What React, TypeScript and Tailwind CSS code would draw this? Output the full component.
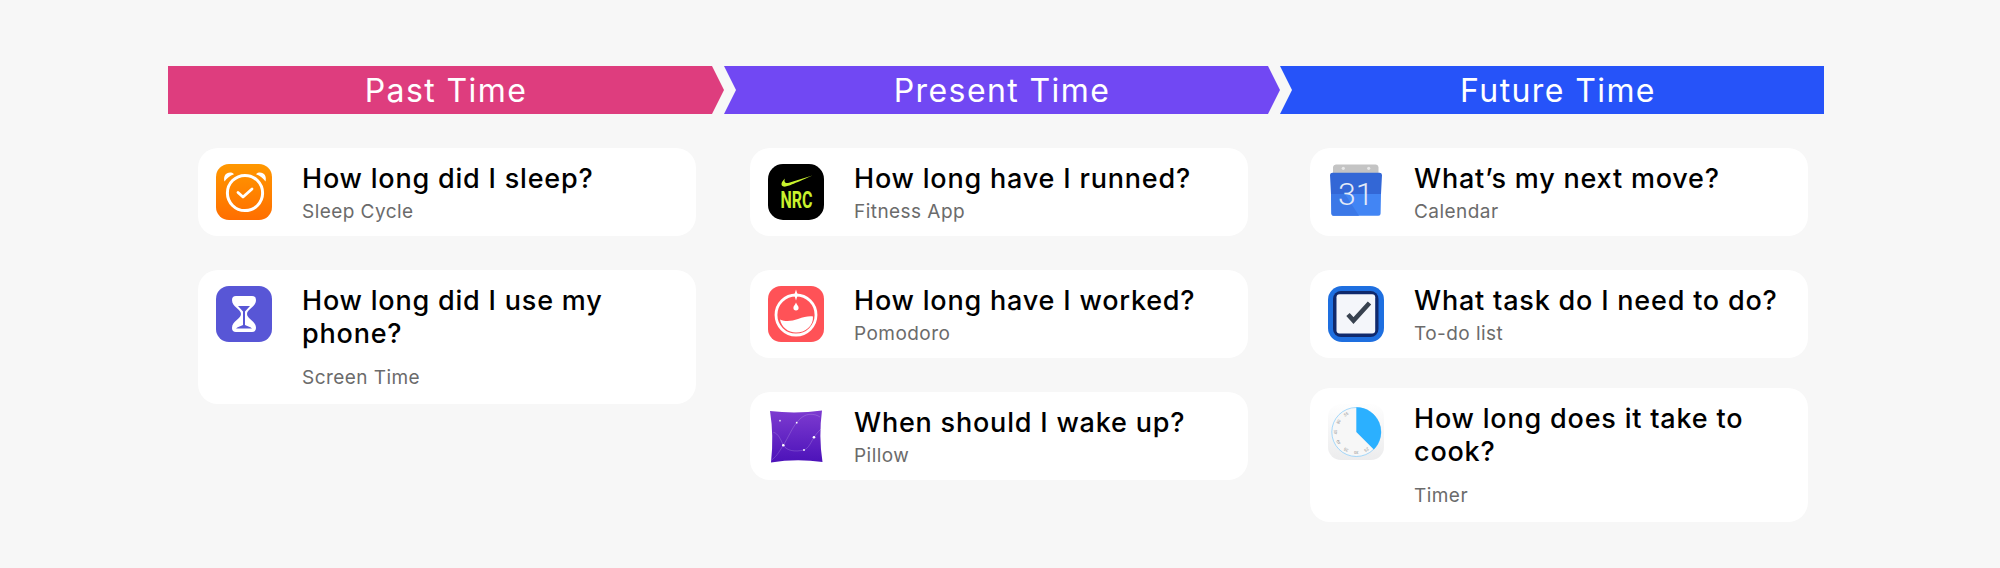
import type { ReactNode } from "react";

function IconFrame({ children }: { children: ReactNode }) {
  return (
    <svg viewBox="0 0 56 56" className="w-14 h-14 shrink-0 mt-4 ml-[18px]">
      {children}
    </svg>
  );
}

function SleepCycleIcon() {
  return (
    <IconFrame>
      <defs>
        <linearGradient id="sleep" x1="0" y1="0" x2="0" y2="1">
          <stop offset="0" stopColor="#ff9800" />
          <stop offset="1" stopColor="#ff6e00" />
        </linearGradient>
      </defs>
      <rect width="56" height="56" rx="13" fill="url(#sleep)" />
      <path d="M8.500 17.500C7 12 10 8 15 8.500 16.500 8.700 17.500 9.500 18 10.200 13.800 11.800 10.800 14.200 8.500 17.500Z" fill="#fff" />
      <path d="M49.500 17.500C51 12 48 8 43 8.500 41.500 8.700 40.500 9.500 40 10.200 44.200 11.800 47.200 14.200 49.500 17.500Z" fill="#fff" />
      <circle cx="29" cy="29" r="17.600" fill="none" stroke="#fff" strokeWidth="3" />
      <path d="M22 28.500 27 33 36 25" fill="none" stroke="#fff" strokeWidth="2.800" strokeLinecap="round" strokeLinejoin="round" />
    </IconFrame>
  );
}

function ScreenTimeIcon() {
  return (
    <IconFrame>
      <rect width="56" height="56" rx="13" fill="#5856d6" />
      <path
        d="M20 10H36A4 4 0 0 1 40 14C40 21 31 23 31 28 31 33 40 35 40 42A4 4 0 0 1 36 46H20A4 4 0 0 1 16 42C16 35 25 33 25 28 25 23 16 21 16 14A4 4 0 0 1 20 10Z"
        fill="#fff"
      />
      <path d="M22 20H34L29 25.500V39C31 40 34 40.500 36 42.500H20C22 40.500 25 40 27 39V25.500Z" fill="#5856d6" />
    </IconFrame>
  );
}

function NrcIcon() {
  return (
    <IconFrame>
      <rect width="56" height="56" rx="15" fill="#000" />
      <path d="M17 14.500C13.500 17.500 12 21.500 15.500 22.500 18 23.200 22 21.500 44.500 11.500L21 18.800C17.500 19.800 15.500 18 17 14.500Z" fill="#c9f22d" />
      <text x="28.500" y="44" textAnchor="middle" fontFamily="Roboto, sans-serif" fontWeight="700" fontSize="24" fill="#c9f22d" textLength="32" lengthAdjust="spacingAndGlyphs">
        NRC
      </text>
    </IconFrame>
  );
}

function PomodoroIcon() {
  return (
    <IconFrame>
      <rect width="56" height="56" rx="13" fill="#ff5257" />
      <circle cx="28" cy="29" r="20" fill="none" stroke="#fff" strokeWidth="2.800" />
      <path d="M28 3.500 29.300 7.700 33.500 9 29.300 10.300 28 14.500 26.700 10.300 22.500 9 26.700 7.700Z" fill="#fff" />
      <path d="M28 16.500C29 19 30.600 20 30.600 21.800A2.600 2.600 0 0 1 25.400 21.800C25.400 20 27 19 28 16.500Z" fill="#fff" />
      <path d="M12 33.500C18 36 24 35 30 33 36 31 40 30 45 30.500 45.500 40 37.500 46.600 28 46.600 20 46.600 13.500 41 12 33.500Z" fill="#fff" />
    </IconFrame>
  );
}

function PillowIcon() {
  return (
    <IconFrame>
      <defs>
        <linearGradient id="pillow" x1="0" y1="0" x2="0" y2="1">
          <stop offset="0" stopColor="#7d3bd0" />
          <stop offset="1" stopColor="#4c12b9" />
        </linearGradient>
      </defs>
      <path d="M2 3Q28 6 54 2.500 50.500 28 54.500 54 28 50.500 3 54.500 6 28 2 3Z" fill="url(#pillow)" />
      <g fill="none" stroke="#fff" strokeOpacity=".35" strokeWidth=".5">
        <path d="M3.700 52C10 47 12 42 15.300 37.300 20 30 24 20 28.700 14.700 32 10 37 6.500 42 6.300 46 6.200 49 7 52 9" />
        <path d="M5.300 24.300C10 25 13 32 15.300 37.300 19 43 27 44 36 42 41 40 43 34 46 29.300 48 26 50 24 53 21" />
      </g>
      <g fill="#fff">
        <circle cx="12" cy="12.700" r=".9" fillOpacity=".8" />
        <circle cx="28.700" cy="14.700" r=".9" />
        <circle cx="46" cy="29.300" r="1.300" />
        <circle cx="15.300" cy="37.300" r="1.300" />
        <circle cx="36" cy="42" r=".9" />
      </g>
    </IconFrame>
  );
}

function CalendarIcon() {
  return (
    <IconFrame>
      <path d="M5 9V3A3 3 0 0 1 8 .5H47A3 3 0 0 1 50.500 3V9Z" fill="#c4c4c4" />
      <circle cx="15.300" cy="4.300" r="1.600" fill="#e8e8e8" />
      <circle cx="40.700" cy="4.300" r="1.600" fill="#e8e8e8" />
      <path d="M2 11A2.500 2.500 0 0 1 4.500 8.700H51.500A2.500 2.500 0 0 1 54 11L53 30H3Z" fill="#3367d6" />
      <path d="M3 30H53L52.600 49.500A2.200 2.200 0 0 1 50.400 51.700H5.600A2.200 2.200 0 0 1 3.400 49.500Z" fill="#4285f4" />
      <path d="M3 30H17L31 51.700H5.600A2.200 2.200 0 0 1 3.400 49.500Z" fill="#3b78e7" />
      <text x="27.700" y="41" textAnchor="middle" fontFamily="Roboto, sans-serif" fontWeight="300" fontSize="32" fill="#e4eaf7">
        31
      </text>
    </IconFrame>
  );
}

function TodoIcon() {
  return (
    <IconFrame>
      <rect width="56" height="56" rx="14" fill="#1e6fe0" />
      <rect x="5" y="5" width="45.500" height="46" rx="8" fill="#10296c" />
      <rect x="8.500" y="8.300" width="38.700" height="39.300" rx="3" fill="#f4f6fa" />
      <path d="M20 28.500 25.500 34.500 41.500 17" fill="none" stroke="#38424f" strokeWidth="4.600" strokeLinejoin="miter" />
    </IconFrame>
  );
}

const dialNumbers = [
  { label: "25", angle: 150 },
  { label: "30", angle: 180 },
  { label: "35", angle: 210 },
  { label: "40", angle: 240 },
  { label: "45", angle: 270 },
  { label: "50", angle: 300 },
  { label: "55", angle: 330 },
];

function TimerIcon() {
  return (
    <IconFrame>
      <defs>
        <linearGradient id="timerBg" x1="0" y1="0" x2="0" y2="1">
          <stop offset="0" stopColor="#fefefe" />
          <stop offset="1" stopColor="#ececed" />
        </linearGradient>
      </defs>
      <rect width="56" height="56" rx="13" fill="url(#timerBg)" />
      <circle cx="28.300" cy="28" r="24.500" fill="#f7f7f7" stroke="#6dc3fb" strokeWidth=".6" />
      <path d="M28.300 3.300V28L45.800 45.500A24.700 24.700 0 0 0 28.300 3.300Z" fill="#2bb0ff" />
      {dialNumbers.map((d) => (
        <text
          key={d.label}
          x="28.300"
          y="9"
          textAnchor="middle"
          fontFamily="Roboto, sans-serif"
          fontSize="4"
          fill="#8e8e8e"
          transform={`rotate(${d.angle} 28.300 28)`}
        >
          {d.label}
        </text>
      ))}
    </IconFrame>
  );
}

function Card({
  icon,
  title,
  app,
  tall,
}: {
  icon: ReactNode;
  title: string;
  app: string;
  tall?: boolean;
}) {
  return (
    <div className={`flex w-[498px] bg-white rounded-[20px] ${tall ? "h-[134px]" : "h-[88px]"}`}>
      {icon}
      <div className="ml-[30px] w-[372px] pt-[14px]">
        <div className={`text-[27px] leading-[33px] font-medium tracking-[0.8px] text-black ${tall ? "mb-[16px]" : "mb-[5px]"}`}>{title}</div>
        <div className="text-[19px] leading-6 tracking-[0.45px] text-[#6b6b6b]">{app}</div>
      </div>
    </div>
  );
}

export default function App() {
  return (
    <main className="h-[568px] bg-[#f7f7f7] pt-[66px] pl-[168px] font-['Inter',sans-serif] overflow-hidden">
      <div className="flex">
        {/* Past */}
        <section className="w-[556px]">
          <div className="h-12 pt-px flex items-center justify-center bg-[#de3d7e] text-white text-[32px] font-[375] tracking-[1.4px] [clip-path:polygon(0_0,calc(100%-12px)_0,100%_50%,calc(100%-12px)_100%,0_100%)]">
            Past Time
          </div>
          <div className="flex flex-col gap-[34px] mt-[34px] ml-[30px]">
            <Card icon={<SleepCycleIcon />} title="How long did I sleep?" app="Sleep Cycle" />
            <Card icon={<ScreenTimeIcon />} title="How long did I use my phone?" app="Screen Time" tall />
          </div>
        </section>

        {/* Present */}
        <section className="w-[556px]">
          <div className="h-12 pt-px flex items-center justify-center bg-[#7148f3] text-white text-[32px] font-[375] tracking-[1.4px] [clip-path:polygon(0_0,calc(100%-12px)_0,100%_50%,calc(100%-12px)_100%,0_100%,12px_50%)]">
            Present Time
          </div>
          <div className="flex flex-col gap-[34px] mt-[34px] ml-[26px]">
            <Card icon={<NrcIcon />} title="How long have I runned?" app="Fitness App" />
            <Card icon={<PomodoroIcon />} title="How long have I worked?" app="Pomodoro" />
            <Card icon={<PillowIcon />} title="When should I wake up?" app="Pillow" />
          </div>
        </section>

        {/* Future */}
        <section className="w-[544px]">
          <div className="h-12 pt-px flex items-center justify-center pl-3 bg-[#2653f9] text-white text-[32px] font-[375] tracking-[1.4px] [clip-path:polygon(0_0,100%_0,100%_100%,0_100%,12px_50%)]">
            Future Time
          </div>
          <div className="flex flex-col mt-[34px] ml-[30px]">
            <Card icon={<CalendarIcon />} title="What’s my next move?" app="Calendar" />
            <div className="h-[34px]" />
            <Card icon={<TodoIcon />} title="What task do I need to do?" app="To-do list" />
            <div className="h-[30px]" />
            <Card icon={<TimerIcon />} title="How long does it take to cook?" app="Timer" tall />
          </div>
        </section>
      </div>
    </main>
  );
}
